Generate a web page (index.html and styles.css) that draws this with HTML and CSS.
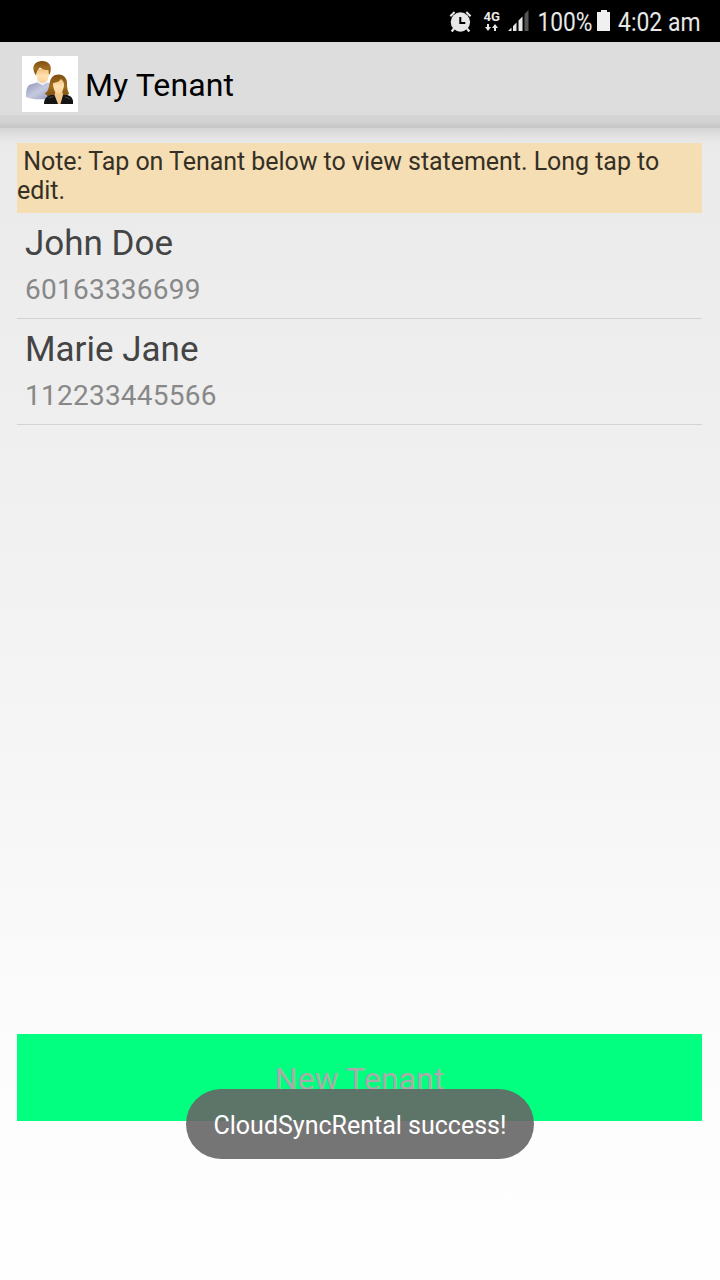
FILE: index.html
```html
<!DOCTYPE html>
<html lang="en">
<head>
  <meta charset="UTF-8" />
  <meta name="viewport" content="width=device-width, initial-scale=1.0"/>
  <title>My Tenant</title>
  <link rel="stylesheet" href="styles.css">
</head>
<body>
  <div class="statusbar">
    <svg class="status-icons" width="280" height="42" viewBox="440 0 280 42">
      <!-- alarm -->
      <g stroke="#e8e8e8" fill="none">
        <circle cx="460.4" cy="22" r="9.7" fill="#e8e8e8" stroke="none"/>
        <path d="M450.3 16.2l4.3-4.2M470.6 16.2l-4.3-4.2" stroke-width="2"/>
        <path d="M454 28.5l-2.3 3M467 28.5l2.3 3" stroke-width="2.2"/>
        <path d="M460.3 17v6h5" stroke="#000" stroke-width="2"/>
      </g>
      <!-- network -->
      <text class="net" x="483.5" y="20.5" textLength="16.5" lengthAdjust="spacingAndGlyphs">4G</text>
      <path d="M487 24h2v3h2l-3 4-3-4h2zM494 31h2v-3h2l-3-4-3 4h2z" fill="#e8e8e8"/>
      <!-- signal -->
      <path d="M508 31l3.5-3.5V31zM513 26l3.5-3.5V31H513zM518.5 20.500l4-4V31h-4z" fill="#e8e8e8"/>
      <path d="M524.5 14l4-4V31h-4z" fill="#555"/>
      <text class="status-text" x="537.5" y="31" textLength="55" lengthAdjust="spacingAndGlyphs">100%</text>
      <!-- battery -->
      <path d="M601 10h6v2h3v19h-13V12h4z" fill="#f0f0f0"/>
      <text class="status-text" x="618" y="31" textLength="82.5" lengthAdjust="spacingAndGlyphs">4:02 am</text>
    </svg>
  </div>

  <div class="actionbar">
    <svg class="logo" width="56" height="56" viewBox="0 0 56 56">
      <defs>
        <linearGradient id="shirt" x1="0" y1="0" x2="1" y2="1">
          <stop offset="0" stop-color="#8f94b4"/>
          <stop offset=".5" stop-color="#c6cae0"/>
          <stop offset="1" stop-color="#8f94b8"/>
        </linearGradient>
        <linearGradient id="hair" x1="0" y1="0" x2="0" y2="1">
          <stop offset="0" stop-color="#7d4f10"/>
          <stop offset=".5" stop-color="#a06d20"/>
          <stop offset="1" stop-color="#7c4f12"/>
        </linearGradient>
        <linearGradient id="skin" x1="0" y1="0" x2="0" y2="1">
          <stop offset="0" stop-color="#f3c27c"/>
          <stop offset=".5" stop-color="#ffe2b0"/>
          <stop offset="1" stop-color="#f8cf94"/>
        </linearGradient>
      </defs>
      <rect width="56" height="56" fill="#fff"/>
      <!-- man -->
      <path d="M4 41c0-8 1-12 6-13l5-1.500 6 2 5-2 5 3v12c-9 2.500-20 2.500-27-.5z" fill="url(#shirt)"/>
      <path d="M14.500 25.500l6 4 5.500-4v-2.500h-11.500z" fill="#eef0f6"/>
      <path d="M14 13h13.500c.5 7-2.500 14-7 14s-7-7-6.500-14z" fill="url(#skin)"/>
      <path d="M14 19.500c-4-6-4-12.500 4-14.200 7-1.300 12.500 3.200 10.500 10.200-.5 2-.8 2.500-1.500 3.500l-.5-5c-4 0-6-.5-8.500-2.500-2 2-3.500 3.500-4 8z" fill="url(#hair)"/>
      <!-- woman -->
      <path d="M22.500 37.500c4-2 4-5 5-10 1-6 4-9 9-9 6 0 9 4.500 8.500 10 0 4 1 7 2 9-2 3-4.500 3-6 3.500H30c-4 0-5.500-.5-5-2z" fill="url(#hair)"/>
      <path d="M22 48c0-5 2-7.500 7-9h16c5 1 6.500 4.500 6 9z" fill="#141414"/>
      <path d="M34 34h6l1 5-2.500 9h-2.500l-3.500-9z" fill="#f1c58c"/>
      <path d="M31 27c4-.5 6.500-1.800 8-4 2 1.500 3 3 3 5.500 0 5.500-3 9.500-5.700 9.500S31 33.500 31 27z" fill="url(#skin)"/>
      <path d="M26.500 42l5-1.500M43 41l5 2" stroke="#444" stroke-width="1" fill="none"/>
    </svg>
    <h1>My Tenant</h1>
  </div>

  <div class="container">
    <p class="note">&nbsp;Note: Tap on Tenant below to view statement. Long tap to edit.</p>

    <ul class="tenants">
      <li>
        <div class="name">John Doe</div>
        <div class="phone">60163336699</div>
      </li>
      <li>
        <div class="name">Marie Jane</div>
        <div class="phone">112233445566</div>
      </li>
    </ul>

    <button class="new-tenant">New Tenant</button>
  </div>

  <div class="toast">CloudSyncRental success!</div>
</body>
</html>
```
FILE: styles.css
```css
* { box-sizing: border-box; }
body { margin: 0; height: 1280px; display: flex; flex-direction: column; overflow: hidden; font-family: Roboto, sans-serif; background: linear-gradient(#e9e9e9 0, #ebebeb 200px, #f0f0f0 480px, #f6f6f6 780px, #fbfbfb 1000px, #fdfdfd 1120px, #fefefe 1280px); }
.statusbar { height: 42px; background: #000; display: flex; justify-content: flex-end; }
.status-text { font-size: 26px; fill: #e8e8e8; }
.net { font-size: 13px; font-weight: bold; fill: #e8e8e8; }
.actionbar { height: 86px; padding: 0 22px 2px; display: flex; align-items: center; gap: 7px; background: linear-gradient(#dddddd 0, #dddddd 73px, #d5d5d5 73px, #d2d2d2 80px, #c6c6c6 85px, #c9c9c9 86px); }
.logo { display: block; }
h1 { margin: 1px 0 0; font-size: 32px; line-height: 38px; font-weight: normal; letter-spacing: 0.1px; color: #000; }
.container { flex: 1; display: flex; flex-direction: column; padding: 15px 18px 159px 17px; background: linear-gradient(rgba(0,0,0,0.09), rgba(0,0,0,0.03) 9px, rgba(0,0,0,0) 17px); }
.note { margin: 0; height: 70px; padding-top: 4px; font-size: 25px; line-height: 29px; letter-spacing: -0.045px; background: #f5deb3; color: #353026; }
.tenants { margin: 0; padding: 0; list-style: none; flex: 1; }
.tenants li { height: 106px; padding: 10px 8px 0; border-bottom: 1px solid #d3d3d3; }
.name { font-size: 35px; line-height: 41px; color: #444; }
.phone { margin-top: 9px; font-size: 28px; line-height: 33px; letter-spacing: 0.24px; color: #888; }
.new-tenant { height: 87px; padding: 2px 0 0; border: none; background: #03ff80; color: #aaa; font-family: inherit; font-size: 32px; letter-spacing: 0.1px; }
.toast { position: absolute; left: 186px; top: 1089px; width: 348px; height: 70px; border-radius: 35px; background: rgba(103,103,103,0.905); color: #fff; font-size: 25px; line-height: 74px; text-align: center; }
```
